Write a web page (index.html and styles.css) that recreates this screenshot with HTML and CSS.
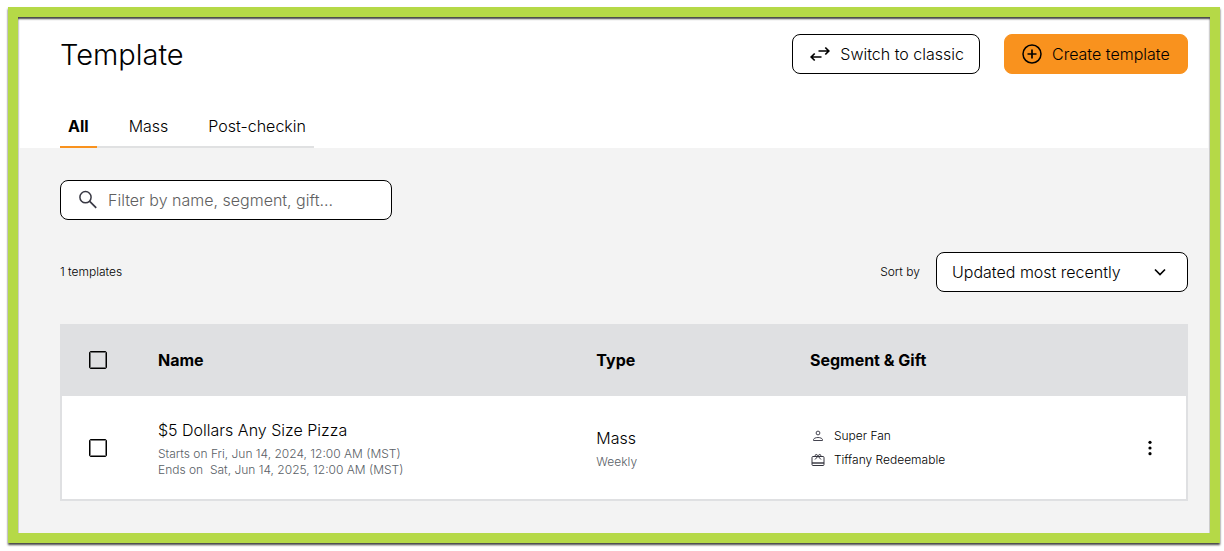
FILE: index.html
```html
<!DOCTYPE html>
<html lang="en">
<head>
<meta charset="utf-8">
<meta name="viewport" content="width=device-width, initial-scale=1">
<title>Template</title>
<link rel="stylesheet" href="styles.css">
</head>
<body>
<div class="frame">
  <header class="header">
    <div class="header-row">
      <h1 class="title">Template</h1>
      <div class="actions">
        <button type="button" class="btn">
          <svg class="icon" viewBox="0 0 24 24" aria-hidden="true"><path d="M10.500 9H20.500M17.300 5.500L20.800 9L17.300 12.500M13.500 15H3.500M6.700 11.500L3.200 15L6.700 18.500" fill="none" stroke="currentColor" stroke-width="1.700"/></svg>
          Switch to classic
        </button>
        <button type="button" class="btn btn-primary">
          <svg class="icon" viewBox="0 0 24 24" aria-hidden="true"><circle cx="12" cy="12" r="9" fill="none" stroke="currentColor" stroke-width="1.500"/><path d="M12 7.500V16.500M7.500 12H16.500" stroke="currentColor" stroke-width="1.700"/></svg>
          Create template
        </button>
      </div>
    </div>
    <nav class="tabs">
      <a href="#all" class="tab tab-active" aria-current="page">All</a>
      <a href="#mass" class="tab">Mass</a>
      <a href="#post" class="tab">Post-checkin</a>
    </nav>
  </header>
  <main class="main">
    <label class="search">
      <svg class="icon" viewBox="0 0 24 24" aria-hidden="true"><circle cx="9.500" cy="9.200" r="5.600" fill="none" stroke="#383843" stroke-width="1.500"/><path d="M13.500 13.200L20.200 19.900" stroke="#383843" stroke-width="1.700"/></svg>
      <input type="text" class="search-input" placeholder="Filter by name, segment, gift..." aria-label="Filter templates">
    </label>
    <div class="toolbar">
      <span class="small">1 templates</span>
      <div class="sort">
        <label class="small" for="sort">Sort by</label>
        <div class="select-box">
          <select id="sort" class="select">
            <option>Updated most recently</option>
          </select>
          <svg class="chevron" viewBox="0 0 24 24" aria-hidden="true"><path d="M7 9.500L12 14.500L17 9.500" fill="none" stroke="#000" stroke-width="1.700"/></svg>
        </div>
      </div>
    </div>
    <table class="table">
      <colgroup><col class="col-check"><col class="col-name"><col class="col-type"><col><col class="col-menu"></colgroup>
      <thead>
        <tr>
          <th class="check-cell"><input type="checkbox" class="check" aria-label="Select all"></th>
          <th>Name</th>
          <th>Type</th>
          <th>Segment &amp; Gift</th>
          <th></th>
        </tr>
      </thead>
      <tbody>
        <tr>
          <td class="check-cell"><input type="checkbox" class="check" aria-label="Select $5 Dollars Any Size Pizza"></td>
          <td>
            <div>$5 Dollars Any Size Pizza</div>
            <div class="meta">Starts on Fri, Jun 14, 2024, 12:00 AM (MST)<br>Ends on&nbsp; Sat, Jun 14, 2025, 12:00 AM (MST)</div>
          </td>
          <td>
            <div>Mass</div>
            <div class="meta">Weekly</div>
          </td>
          <td>
            <div class="detail">
              <svg class="icon-small" viewBox="0 0 16 16" aria-hidden="true"><g fill="none" stroke="#444450"><circle cx="8" cy="5" r="1.900"/><path d="M3.500 12.500V11.700C3.500 10.500 5.600 9.500 8 9.500S12.500 10.500 12.500 11.700V12.500Z"/></g></svg>
              Super Fan
            </div>
            <div class="detail">
              <svg class="icon-small" viewBox="0 0 16 16" aria-hidden="true"><g fill="none" stroke="#33333d"><rect x="2" y="4.500" width="12" height="9" rx="1"/><path d="M2 11H14" stroke-width="1.400"/><path d="M5 7.500L8 4.300L11 7.500"/><circle cx="6.300" cy="3.600" r="1.100"/><circle cx="9.700" cy="3.600" r="1.100"/></g></svg>
              Tiffany Redeemable
            </div>
          </td>
          <td>
            <button type="button" class="menu" aria-label="More actions"><svg class="icon" viewBox="0 0 24 24" aria-hidden="true"><circle cx="12" cy="6.300" r="1.600"/><circle cx="12" cy="12" r="1.600"/><circle cx="12" cy="17.700" r="1.600"/></svg></button>
          </td>
        </tr>
      </tbody>
    </table>
  </main>
</div>
</body>
</html>
```
FILE: styles.css
```css
* { box-sizing: border-box; }
body {
  margin: 0;
  padding: 7px 4px 8px 8px;
  background: #fff;
  color: #000;
  font: 300 16px/24px Inter, "Liberation Sans", sans-serif;
}
button, input, select { font: inherit; color: inherit; }
.frame {
  border: 10px solid #b5d947;
  box-shadow: 0 2px 2px #444, inset 0 2px 2px #444;
}
.header { padding: 17px 22px 0 42px; }
.header-row, .toolbar { display: flex; align-items: center; justify-content: space-between; }
.title { margin: 0; padding-top: 2px; font-size: 29px; font-weight: 300; line-height: 38px; }
.actions { display: flex; gap: 24px; }
.btn {
  display: flex;
  align-items: center;
  gap: 8px;
  height: 40px;
  padding: 0 15px;
  border: 1px solid #000;
  border-radius: 8px;
  background: #fff;
}
.btn-primary { min-width: 184px; border-color: #f9921e; background: #f9921e; }
.icon { display: block; flex: none; width: 24px; height: 24px; }
.tabs {
  display: flex;
  gap: 24px;
  width: max-content;
  margin-top: 32px;
  box-shadow: inset 0 -2px #e0e1e2;
}
.tab { padding: 8px 8px 10px; color: #000; text-decoration: none; }
.tab-active { border-bottom: 2px solid #f9921e; padding-bottom: 8px; font-weight: 700; }
.main { padding: 32px 22px 32px 42px; background: #f3f3f3; box-shadow: inset 1px 0 #ccc, inset -1px 0 #ccc; }
.search {
  display: flex;
  align-items: center;
  gap: 8px;
  width: 332px;
  height: 40px;
  padding: 0 15px;
  border: 1px solid #000;
  border-radius: 8px;
  background: #fff;
}
.search-input { flex: 1; min-width: 0; padding: 0; border: 0; outline: 0; background: none; }
.search-input::placeholder { color: #606060; opacity: 1; }
.toolbar { margin: 32px 0; }
.small { font-size: 12px; }
.sort { display: flex; align-items: center; gap: 16px; }
.select-box { position: relative; }
.select {
  display: block;
  width: 252px;
  height: 40px;
  padding: 0 48px 0 15px;
  border: 1px solid #000;
  border-radius: 8px;
  background: #fff;
  appearance: none;
}
.chevron { position: absolute; top: 8px; right: 16px; width: 24px; height: 24px; pointer-events: none; }
.table {
  width: 100%;
  table-layout: fixed;
  border-spacing: 0;
  border: 2px solid #dfe0e2;
  background: #fff;
}
.table th { height: 70px; padding: 0 0 2px; background: #dfe0e2; text-align: left; font-weight: 700; }
.table td { padding: 22px 0 21px; }
.col-check { width: 96px; }
.col-name { width: 39%; }
.col-type { width: 19%; }
.col-menu { width: 72px; }
.table .check-cell { padding-left: 27px; }
.check {
  display: block;
  width: 18px;
  height: 18px;
  margin: 0;
  border: 1px solid #000;
  border-radius: 2px;
  box-shadow: inset 0 0 0 1px rgba(0, 0, 0, 0.5);
  appearance: none;
}
.meta { margin-top: 4px; color: #596066; font-size: 12px; line-height: 16px; }
.detail { display: flex; align-items: center; gap: 8px; font-size: 12px; }
.icon-small { width: 16px; height: 16px; }
.menu { display: block; margin: 0 auto; padding: 0; border: 0; background: none; }
```
